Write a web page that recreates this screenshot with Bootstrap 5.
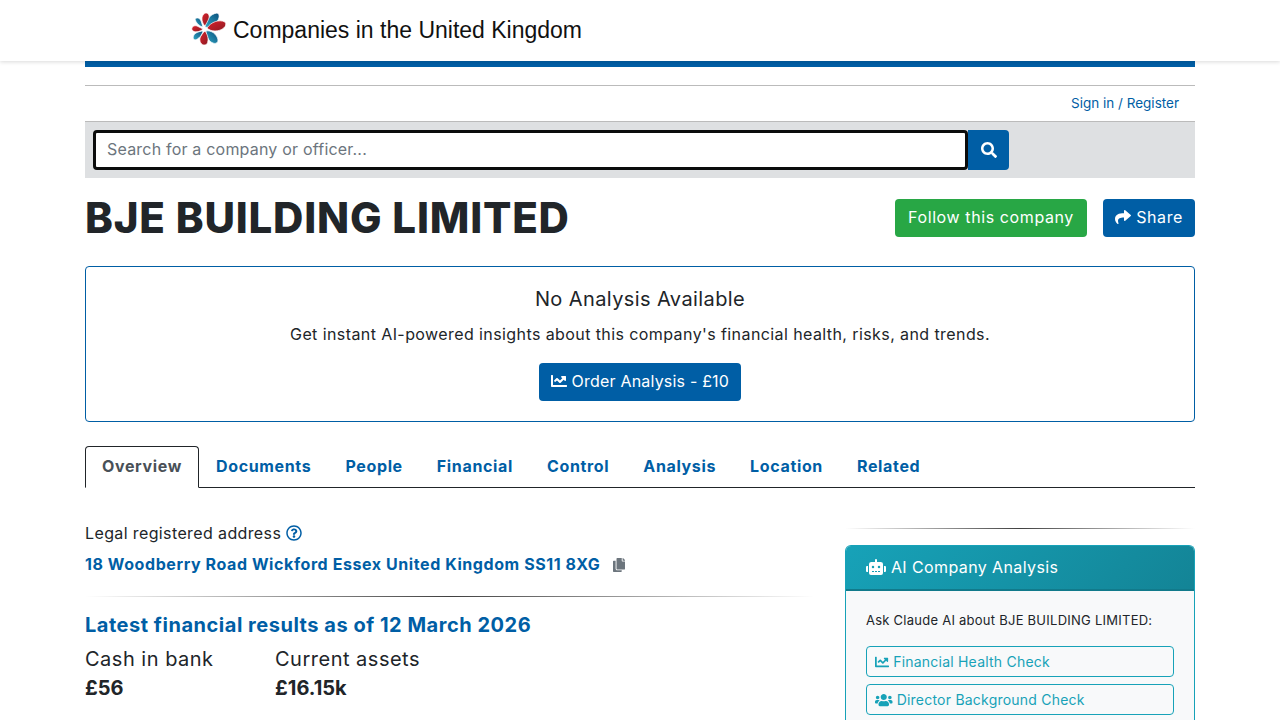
<!DOCTYPE html>
<html lang="en">
<head>
    <meta charset="UTF-8" />
    <meta name="viewport" content="width=device-width, initial-scale=1.0" />
    <title>BJE BUILDING LIMITED</title>
    <link href="https://cdn.jsdelivr.net/npm/bootstrap@5.3.0/dist/css/bootstrap.min.css" rel="stylesheet" />
    <style>
        html, body { height: 720px; overflow: hidden; }
        body { font-family: Inter, "Liberation Sans", sans-serif; color: #212529; background: #fff; }
        a { color: #005ea5; text-decoration: none; }
        .ico { display: inline-block; height: 1em; fill: currentColor; vertical-align: -.125em; }

        .site-top { height: 61px; background: #fff; box-shadow: 0 1px 4px rgba(0,0,0,.15); position: relative; }
        .wrap { width: 1140px; margin: 0 auto; padding: 0 15px; }
        .logo-box { padding: 10px 0 0 108px; }
        .logo-name { font-family: "Liberation Sans", sans-serif; font-size: 23px; color: #111; line-height: 40px; margin-left: 8px; }

        .blue-bar { height: 6px; background: #005ea5; }
        .sign-row { margin-top: 18px; border-top: 1px solid #bbb; height: 36px; font-size: 13.5px; padding-right: 16px; }
        .search-band { background: #dee0e2; border-top: 1px solid #bbb; height: 57px; padding: 8px; }
        .search-input { width: 875px; height: 40px; border: 3px solid #0b0c0c; border-radius: 4px; padding: 0 11px 2px; font-size: 16px; letter-spacing: .2px; background: #fff; }
        .search-input::placeholder { color: #6c757d; }
        .search-btn { width: 41px; height: 40px; background: #005ea5; color: #fff; border: 0; border-radius: 0 4px 4px 0; font-size: 16px; padding: 0; }

        .co-head { height: 88px; padding-bottom: 8px; }
        .co-title { font-size: 42px; font-weight: 800; line-height: 50px; margin: 0; letter-spacing: .8px; }
        .btn-follow, .btn-share, .btn-order { height: 38px; border: 0; font-size: 16px; color: #fff; border-radius: 4px; padding: 0 0 2px; }
        .btn-follow { background: #28a745; width: 192px; letter-spacing: .6px; }
        .btn-share, .btn-order { background: #005ea5; }
        .btn-share { width: 92px; margin-left: 16px; letter-spacing: .6px; }
        .btn-order { width: 202px; letter-spacing: .2px; }

        .analysis-box { border: 1px solid #005ea5; border-radius: 4px; height: 156px; padding-top: 20px; }
        .analysis-box h5 { font-size: 20px; font-weight: 400; margin: 0 0 11px; line-height: 24px; letter-spacing: .4px; }
        .analysis-box p { font-size: 16px; margin: 0 0 17px; line-height: 24px; letter-spacing: .41px; }

        .tab-list { margin-top: 24px; border-bottom: 1px solid #212529; height: 42px; }
        .tab-list .nav-link { padding: 0 16px; height: 42px; line-height: 38px; font-weight: 700; font-size: 16px; letter-spacing: .65px; color: #005ea5; border: 1px solid transparent; border-radius: 4px 4px 0 0; }
        .tab-list .nav-link.active { color: #495057; border-color: #212529 #212529 #fff; background: #fff; }

        .main-row { margin: 24px -15px 0; }
        .main-row > div { padding: 0 15px; }
        .legal-label { font-size: 16px; line-height: 24px; margin-top: 9px; letter-spacing: .38px; }
        .address { font-size: 16px; font-weight: 700; line-height: 24px; margin-top: 7px; margin-bottom: 20px; letter-spacing: .58px; }
        .copy-ico { color: #6c757d; font-size: 14px; margin-left: 8px; }
        .fade-rule { height: 1px; border: 0; opacity: 1; margin: 0; background: linear-gradient(to right, rgba(0,0,0,0), rgba(0,0,0,.75), rgba(0,0,0,0)); }
        .side-rule { margin-top: 16px; }
        .fin-title { font-size: 20px; font-weight: 700; line-height: 24px; color: #005ea5; margin: 16px 0 0; letter-spacing: .52px; }
        .fin-col { width: 190px; }
        .fin-label { font-size: 20px; line-height: 24px; margin-top: 10px; letter-spacing: .5px; }
        .fin-value { font-size: 20px; font-weight: 700; line-height: 24px; margin-top: 5px; }

        .ai-card { margin-top: 16px; border: 1px solid #17a2b8; border-bottom: 0; border-radius: 6px 6px 0 0; background: #f8f9fa; overflow: hidden; }
        .ai-head { height: 45px; line-height: 43px; padding: 0 20px; color: #fff; font-size: 16px; letter-spacing: .4px; background: linear-gradient(135deg, #17a2b8, #138496); border-bottom: 2px solid #117a8b; }
        .ai-body { padding: 19px 20px 5px; }
        .ai-body p { font-size: 13px; line-height: 20px; margin: 0 0 16px; letter-spacing: .25px; }
        .ai-link { display: block; height: 31px; line-height: 29px; border: 1px solid #17a2b8; border-radius: 4px; color: #17a2b8; font-size: 14px; letter-spacing: .22px; padding: 0 8px; }
        .ai-link + .ai-link { margin-top: 7px; }
    </style>
</head>
<body>
    <header class="site-top">
        <div class="wrap">
            <div class="logo-box d-flex align-items-center">
                <svg width="32" height="34" viewBox="0 0 32 34" overflow="visible">
                    <defs>
                        <linearGradient id="redPetal" x1="0" y1="0" x2="1" y2="1"><stop offset="0" stop-color="#d8222c"/><stop offset="1" stop-color="#8e1a22"/></linearGradient>
                        <linearGradient id="bluePetal" x1="0" y1="1" x2="1" y2="0"><stop offset="0" stop-color="#2fa7c4"/><stop offset="1" stop-color="#0b4f7c"/></linearGradient>
                    </defs>
                    <g transform="translate(12 16)" stroke="#fff" stroke-width=".7">
                        <path fill="url(#bluePetal)" d="M0 -2C0 -8 5 -15 12 -16C16 -15 14 -8 9 -4C6 -2 3 -1 0 -2Z"/>
                        <path fill="url(#redPetal)" d="M2 -1C6 -7 14 -10 20 -7C23 -3 17 2 10 2C7 2 4 1 2 -1Z"/>
                        <path fill="url(#bluePetal)" d="M1 2C6 1 12 5 13 11C13 16 7 15 4 11C2 8 1 5 1 2Z"/>
                        <path fill="url(#redPetal)" d="M0 2C3 6 4 11 2 15C-2 18 -6 14 -5 9C-4 6 -2 4 0 2Z"/>
                        <path fill="url(#bluePetal)" d="M-2 2C-3 6 -6 10 -10 11C-13 10 -12 6 -9 4C-7 3 -4 2 -2 2Z"/>
                        <path fill="url(#redPetal)" d="M-2 0C-5 3 -11 4 -13 1C-14 -2 -11 -4 -8 -3C-6 -2 -4 -1 -2 0Z"/>
                        <path fill="url(#bluePetal)" d="M-2 -2C-6 -3 -9 -6 -10 -10C-8 -12 -5 -11 -4 -8C-3 -6 -3 -4 -2 -2Z"/>
                        <path fill="url(#redPetal)" d="M0 -3C-3 -6 -4 -11 -2 -14C1 -18 5 -15 4 -11C3 -8 1 -5 0 -3Z"/>
                    </g>
                </svg>
                <span class="logo-name">Companies in the United Kingdom</span>
            </div>
        </div>
    </header>

    <div class="wrap">
        <div class="blue-bar"></div>
        <div class="sign-row d-flex align-items-center justify-content-end"><a href="#">Sign in / Register</a></div>
        <div class="search-band d-flex">
            <input class="search-input" type="text" placeholder="Search for a company or officer...">
            <button class="search-btn" type="button" aria-label="Search">
                <svg class="ico" viewBox="0 0 512 512"><path d="M505 442.7L405.3 343c-4.5-4.5-10.6-7-17-7H372c27.6-35.3 44-79.7 44-128C416 93.1 322.9 0 208 0S0 93.1 0 208s93.1 208 208 208c48.3 0 92.7-16.4 128-44v16.3c0 6.4 2.5 12.5 7 17l99.7 99.7c9.4 9.4 24.6 9.4 33.9 0l28.3-28.3c9.4-9.4 9.4-24.6.1-34zM208 336c-70.7 0-128-57.2-128-128 0-70.7 57.2-128 128-128 70.7 0 128 57.2 128 128 0 70.7-57.2 128-128 128z"/></svg>
            </button>
        </div>

        <div class="co-head d-flex justify-content-between align-items-center">
            <h1 class="co-title">BJE BUILDING LIMITED</h1>
            <div class="d-flex">
                <button class="btn-follow" type="button">Follow this company</button>
                <button class="btn-share" type="button">
                    <svg class="ico" viewBox="0 0 512 512"><path d="M503.691 189.836L327.687 37.851C312.281 24.546 288 35.347 288 56.015v80.053C127.371 137.907 0 170.1 0 322.326c0 61.441 39.581 122.309 83.333 154.132 13.653 9.931 33.111-2.533 28.077-18.631C66.066 312.814 132.917 274.316 288 272.085V360c0 20.7 24.3 31.453 39.687 18.164l176.004-152c11.071-9.562 11.086-26.753 0-36.328z"/></svg>
                    Share
                </button>
            </div>
        </div>

        <div class="analysis-box text-center">
            <h5>No Analysis Available</h5>
            <p>Get instant AI-powered insights about this company's financial health, risks, and trends.</p>
            <button class="btn-order" type="button">
                <svg class="ico" viewBox="0 0 512 512"><path d="M496 384H64V80c0-8.84-7.16-16-16-16H16C7.16 64 0 71.16 0 80v336c0 17.67 14.33 32 32 32h464c8.84 0 16-7.16 16-16v-32c0-8.84-7.16-16-16-16zM464 96H345.94c-21.38 0-32.09 25.85-16.97 40.97l32.4 32.4L288 242.75l-73.37-73.37c-12.5-12.5-32.76-12.5-45.25 0l-68.69 68.69c-6.25 6.25-6.25 16.38 0 22.63l22.62 22.62c6.25 6.25 16.38 6.25 22.63 0L192 237.25l73.37 73.37c12.5 12.5 32.76 12.5 45.25 0l96-96 32.4 32.4c15.12 15.12 40.97 4.41 40.97-16.97V112c.01-8.84-7.15-16-15.99-16z"/></svg>
                Order Analysis - £10
            </button>
        </div>

        <ul class="nav tab-list">
            <li class="nav-item"><a class="nav-link active" href="#">Overview</a></li>
            <li class="nav-item"><a class="nav-link" href="#">Documents</a></li>
            <li class="nav-item"><a class="nav-link" href="#">People</a></li>
            <li class="nav-item"><a class="nav-link" href="#">Financial</a></li>
            <li class="nav-item"><a class="nav-link" href="#">Control</a></li>
            <li class="nav-item"><a class="nav-link" href="#">Analysis</a></li>
            <li class="nav-item"><a class="nav-link" href="#">Location</a></li>
            <li class="nav-item"><a class="nav-link" href="#">Related</a></li>
        </ul>

        <div class="row main-row">
            <div class="col-8">
                <div class="legal-label">Legal registered address
                    <a href="#"><svg class="ico" viewBox="0 0 512 512"><path d="M256 8C119.043 8 8 119.083 8 256c0 136.997 111.043 248 248 248s248-111.003 248-248C504 119.083 392.957 8 256 8zm0 448c-110.532 0-200-89.431-200-200 0-110.495 89.472-200 200-200 110.491 0 200 89.471 200 200 0 110.53-89.431 200-200 200zm107.244-255.2c0 67.052-72.421 68.084-72.421 92.863V300c0 6.627-5.373 12-12 12h-45.647c-6.627 0-12-5.373-12-12v-8.659c0-35.745 27.1-50.034 47.579-61.516 17.561-9.845 28.324-16.541 28.324-29.579 0-17.246-21.999-28.693-39.784-28.693-23.189 0-33.894 10.977-48.942 29.969-4.057 5.12-11.46 6.071-16.666 2.124l-27.824-21.098c-5.107-3.872-6.251-11.066-2.644-16.363C184.846 131.491 214.94 112 261.794 112c49.071 0 101.45 38.304 101.45 88.8zM298 368c0 23.159-18.841 42-42 42s-42-18.841-42-42 18.841-42 42-42 42 18.841 42 42z"/></svg></a>
                </div>
                <div class="address">
                    <a href="#">18 Woodberry Road Wickford Essex United Kingdom SS11 8XG</a>
                    <svg class="ico copy-ico" viewBox="0 0 448 512"><path d="M320 448v40c0 13.255-10.745 24-24 24H24c-13.255 0-24-10.745-24-24V120c0-13.255 10.745-24 24-24h72v296c0 30.879 25.121 56 56 56h168zm0-344V0H152c-13.255 0-24 10.745-24 24v368c0 13.255 10.745 24 24 24h272c13.255 0 24-10.745 24-24V128H344c-13.2 0-24-10.8-24-24zm120.971-31.029L375.029 7.029A24 24 0 0 0 358.059 0H352v96h96v-6.059a24 24 0 0 0-7.029-16.97z"/></svg>
                </div>
                <hr class="fade-rule">
                <h2 class="fin-title">Latest financial results as of 12 March 2026</h2>
                <div class="d-flex">
                    <div class="fin-col">
                        <div class="fin-label">Cash in bank</div>
                        <div class="fin-value">£56</div>
                    </div>
                    <div class="fin-col">
                        <div class="fin-label">Current assets</div>
                        <div class="fin-value">£16.15k</div>
                    </div>
                </div>
            </div>
            <div class="col-4">
                <hr class="fade-rule side-rule">
                <div class="ai-card">
                    <div class="ai-head">
                        <svg class="ico" viewBox="0 0 640 512"><path d="M32,224H64V416H32A31.96166,31.96166,0,0,1,0,384V256A31.96166,31.96166,0,0,1,32,224Zm512-48V448a64.06328,64.06328,0,0,1-64,64H160a64.06328,64.06328,0,0,1-64-64V176a79.974,79.974,0,0,1,80-80H288V32a32,32,0,0,1,64,0V96H464A79.974,79.974,0,0,1,544,176ZM264,256a40,40,0,1,0-40,40A39.997,39.997,0,0,0,264,256Zm-8,128H192v32h64Zm96,0H288v32h64ZM456,256a40,40,0,1,0-40,40A39.997,39.997,0,0,0,456,256Zm-8,128H384v32h64ZM640,256V384a31.96166,31.96166,0,0,1-32,32H576V224h32A31.96166,31.96166,0,0,1,640,256Z"/></svg>
                        AI Company Analysis
                    </div>
                    <div class="ai-body">
                        <p>Ask Claude AI about BJE BUILDING LIMITED:</p>
                        <a class="ai-link" href="#">
                            <svg class="ico" viewBox="0 0 512 512"><path d="M496 384H64V80c0-8.84-7.16-16-16-16H16C7.16 64 0 71.16 0 80v336c0 17.67 14.33 32 32 32h464c8.84 0 16-7.16 16-16v-32c0-8.84-7.16-16-16-16zM464 96H345.94c-21.38 0-32.09 25.85-16.97 40.97l32.4 32.4L288 242.75l-73.37-73.37c-12.5-12.5-32.76-12.5-45.25 0l-68.69 68.69c-6.25 6.25-6.25 16.38 0 22.63l22.62 22.62c6.25 6.25 16.38 6.25 22.63 0L192 237.25l73.37 73.37c12.5 12.5 32.76 12.5 45.25 0l96-96 32.4 32.4c15.12 15.12 40.97 4.41 40.97-16.97V112c.01-8.84-7.15-16-15.99-16z"/></svg>
                            Financial Health Check
                        </a>
                        <a class="ai-link" href="#">
                            <svg class="ico" viewBox="0 0 640 512"><path d="M96 224c35.3 0 64-28.7 64-64s-28.7-64-64-64-64 28.7-64 64 28.7 64 64 64zm448 0c35.3 0 64-28.7 64-64s-28.7-64-64-64-64 28.7-64 64 28.7 64 64 64zm32 32h-64c-17.6 0-33.5 7.1-45.1 18.6 40.3 22.1 68.9 62 75.1 109.4h66c17.7 0 32-14.3 32-32v-32c0-35.3-28.7-64-64-64zm-256 0c61.9 0 112-50.1 112-112S381.9 32 320 32 208 82.1 208 144s50.1 112 112 112zm76.8 32h-8.3c-20.8 10-43.9 16-68.5 16s-47.6-6-68.5-16h-8.3C179.6 288 128 339.6 128 403.2V432c0 26.5 21.5 48 48 48h288c26.5 0 48-21.5 48-48v-28.8c0-63.6-51.6-115.2-115.2-115.2zm-223.7-13.4C161.5 263.1 145.6 256 128 256H64c-35.3 0-64 28.7-64 64v32c0 17.7 14.3 32 32 32h65.9c6.3-47.4 34.9-87.3 75.2-109.4z"/></svg>
                            Director Background Check
                        </a>
                    </div>
                </div>
            </div>
        </div>
    </div>
    <script src="https://cdn.jsdelivr.net/npm/bootstrap@5.3.0/dist/js/bootstrap.bundle.min.js"></script>
</body>
</html>
